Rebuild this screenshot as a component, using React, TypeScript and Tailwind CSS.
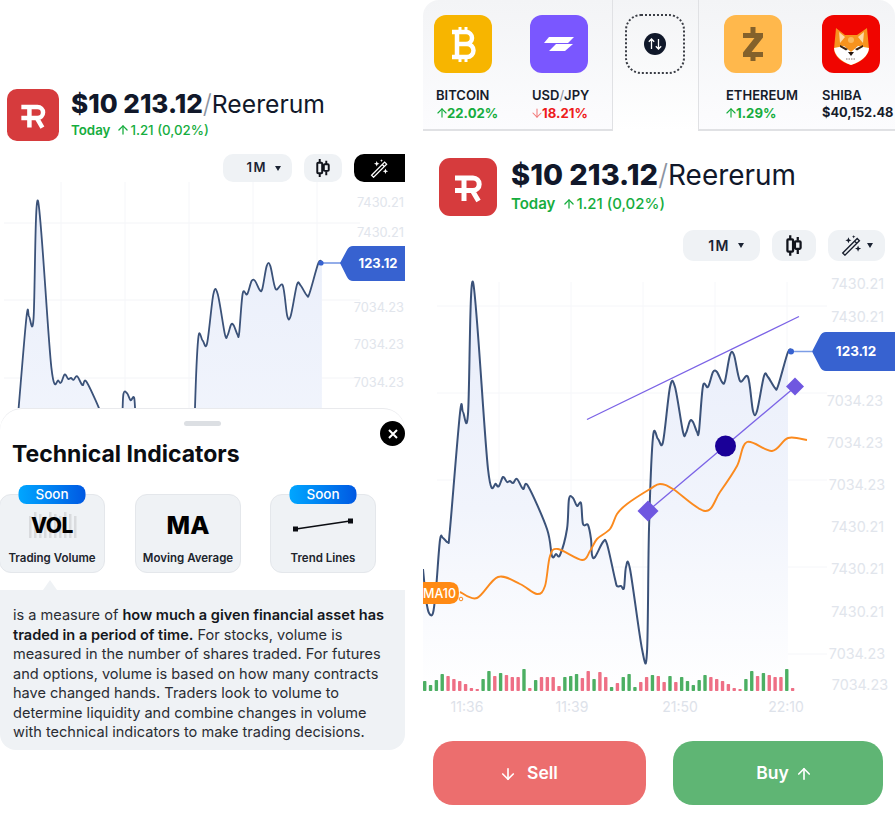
import {ArrowDown, ArrowUp} from "lucide-react";

type Pt = [number, number];

// price line, in the coordinates of the right hand chart
const PRICE: Pt[] = [
    [423, 570], [426, 600], [429, 614], [433, 614], [436, 590], [440, 541], [443, 539], [448, 543], [450, 530],
    [460, 414], [463, 413], [468, 415], [473, 283], [488, 470], [496, 485], [499, 487], [503, 478], [507, 483],
    [510, 482], [513, 484], [517, 480], [523, 490], [528, 487], [547, 530], [552, 557], [556, 555], [560, 556],
    [567, 530], [569, 500], [573, 499], [577, 507], [581, 504], [583, 525], [588, 526], [591, 540], [592, 556],
    [595, 558], [603, 543], [607, 545], [615, 580], [617, 587], [621, 587], [624, 589], [626, 568], [630, 570],
    [642, 650], [647, 653], [649, 530], [653, 438], [658, 440], [663, 443], [670, 388], [675, 388], [683, 433],
    [686, 434], [690, 422], [693, 423], [697, 433], [699, 432], [703, 387], [708, 388], [713, 373], [717, 373],
    [722, 383], [725, 382], [730, 356], [734, 356], [740, 382], [748, 378], [753, 412], [757, 412], [764, 377],
    [768, 378], [775, 389], [778, 387], [788, 353], [792, 352],
];

const MA: Pt[] = [
    [460, 593], [477, 599], [498, 578], [520, 585], [537, 595], [545, 587], [550, 557], [558, 550], [582, 561],
    [590, 552], [597, 540], [610, 530], [617, 515], [627, 505], [650, 490], [660, 485], [673, 490], [705, 512],
    [720, 493], [737, 467], [747, 443], [772, 452], [788, 439], [807, 441],
];

const VOLUME = [
    "g10", "g6", "g11", "g17", "r15", "r12", "r10", "r7", "r3", "r2", "g12", "g20", "r15", "g18", "r16", "r14",
    "r14", "g22", "r3", "g11", "r14", "r14", "r14", "r5", "g14", "g15", "g17", "r13", "r20", "g12", "r19", "r14",
    "g4", "r8", "g14", "g17", "g4", "r9", "r14", "g16", "r15", "r9", "g15", "r9", "g14", "g10", "g6", "g11", "g16",
    "r14", "r12", "r10", "r7", "r3", "r2", "g12", "g20", "r15", "g18", "r16", "r14", "r14", "g22", "r3",
];

function smooth(points: Pt[]) {
    let d = `M${points[0][0]} ${points[0][1]}`;
    for (let i = 0; i < points.length - 1; i++) {
        const p0 = points[Math.max(i - 1, 0)];
        const p1 = points[i];
        const p2 = points[i + 1];
        const p3 = points[Math.min(i + 2, points.length - 1)];
        const c1x = p1[0] + (p2[0] - p0[0]) / 6;
        const c1y = p1[1] + (p2[1] - p0[1]) / 6;
        const c2x = p2[0] - (p3[0] - p1[0]) / 6;
        const c2y = p2[1] - (p3[1] - p1[1]) / 6;
        d += ` C${c1x.toFixed(1)} ${c1y.toFixed(1)} ${c2x.toFixed(1)} ${c2y.toFixed(1)} ${p2[0]} ${p2[1]}`;
    }
    return d;
}

function LogoR() {
    return (
        <svg viewBox="0 0 58 58" className="h-full w-full">
            <rect width="58" height="58" rx="11" fill="#d63b3d"/>
            <path d="M16 20H34a6.2 6.2 0 0 1 0 12.4H16M25 20V43M33 32l6.5 11" fill="none" stroke="#fff" strokeWidth="5"/>
        </svg>
    );
}

function Caret() {
    return (
        <svg viewBox="0 0 6 5" className="h-[5px] w-[6px]">
            <path d="M0 0H6L3 5Z" fill="#1b2333"/>
        </svg>
    );
}

function CandleIcon({className}: {className?: string}) {
    return (
        <svg viewBox="0 0 17 22" className={className} fill="none" stroke="#11141c" strokeWidth="2.4">
            <path d="M4.500 0V4M4.500 18V22M12.500 2V6M12.500 15V20"/>
            <rect x="1.500" y="4.500" width="6" height="13" rx="1"/>
            <rect x="9.500" y="6.500" width="6" height="8" rx="1"/>
        </svg>
    );
}

function WandIcon({className}: {className?: string}) {
    return (
        <svg viewBox="0 0 24 24" className={className} fill="none">
            <path d="M2 20.500L18.500 4L21 6.500L4.500 23ZM15.500 7L18 9.500" stroke="currentColor" strokeWidth="1.600"/>
            <path d="M8.500 2.500L9.500 5L12 6L9.500 7L8.500 9.500L7.500 7L5 6L7.500 5Z" fill="currentColor"/>
            <path d="M14.500 0L15 1.500L16.500 2L15 2.500L14.500 4L14 2.500L12.500 2L14 1.500Z" fill="currentColor"/>
            <path d="M19.500 12L20.500 14.500L23 15.500L20.500 16.500L19.500 19L18.500 16.500L16 15.500L18.500 14.500Z" fill="currentColor"/>
        </svg>
    );
}

function PriceHeader({big}: {big: boolean}) {
    return (
        <div className={big ? "flex items-center gap-[14px]" : "flex items-center gap-[12px]"}>
            <div className={big ? "h-[58px] w-[58px]" : "h-[52px] w-[52px]"}><LogoR/></div>
            <div className={big ? "pb-[2px]" : "pb-[2px]"}>
                <div className={big ? "text-[29px] leading-[32px] text-[#11182a]" : "text-[26px] leading-[28px] text-[#11182a]"}>
                    <span className="font-extrabold">$10 213.12</span>
                    <span className="font-light text-[#8b93a1]">/</span>
                    <span className={big ? "text-[27.900px] font-normal" : "text-[24.700px] font-normal"}>Reererum</span>
                </div>
                <div className={big ? "mt-[3px] flex items-center text-[15px] leading-[20px] font-medium text-[#16ad3e]" : "mt-[3px] flex items-center text-[13.300px] leading-[18px] font-medium text-[#16ad3e]"}>
                    <span className="font-semibold">Today</span>
                    <ArrowUp size={14} strokeWidth={2.2} className={big ? "ml-[7px]" : "ml-[6px]"}/>
                    <span>1.21 (0,02%)</span>
                </div>
            </div>
        </div>
    );
}

function LeftChart() {
    const pts = PRICE.map(([x, y]): Pt => [38 + (x - 473) * 0.89, 200 + (y - 282) * 0.89]);
    const line = smooth(pts);
    const labels: [string, number, number][] = [
        ["7430.21", 202, 404], ["7430.21", 232, 404], ["7034.23", 307, 404], ["7034.23", 344, 404], ["7034.23", 382, 404],
    ];
    return (
        <svg viewBox="0 182 405 226" className="block h-[226px] w-[405px]">
            <defs>
                <linearGradient id="leftFill" x1="0" y1="0" x2="0" y2="1">
                    <stop offset="0" stopColor="#e9eefa"/>
                    <stop offset="1" stopColor="#f7f9fe"/>
                </linearGradient>
            </defs>
            {[223, 300, 378].map((y) => <path key={y} d={`M4 ${y}H360`} stroke="#f3f4f7"/>)}
            {[61, 125, 189, 253, 317].map((x) => <path key={x} d={`M${x} 182V408`} stroke="#f5f6f9"/>)}
            <path d={`${line} L${pts[pts.length - 1][0]} 600 L${pts[0][0]} 600Z`} fill="url(#leftFill)"/>
            <path d={line} fill="none" stroke="#3b5279" strokeWidth="1.800"/>
            <path d="M321 263H341" stroke="#6f92e2" strokeWidth="1.500"/>
            <circle cx="321" cy="263" r="2.600" fill="#3762d0"/>
            <path d="M340 263L347 250Q349 246 353 246H405V281H353Q349 281 347 277Z" fill="#3762d0"/>
            <text x="378" y="267.500" textAnchor="middle" className="fill-white text-[13px] font-bold">123.12</text>
            {labels.map(([t, y, x]) => (
                <text key={y} x={x} y={y + 4.5} textAnchor="end" className="fill-[#e1e5ec] text-[12.800px]">{t}</text>
            ))}
        </svg>
    );
}

function RightChart() {
    const line = smooth(PRICE);
    const labels: [string, number, number][] = [
        ["7430.21", 285, 884], ["7430.21", 318, 884], ["7034.23", 402, 883], ["7034.23", 444, 883], ["7034.23", 486, 885],
        ["7430.21", 528, 884], ["7430.21", 570, 884], ["7430.21", 613, 884], ["7034.23", 655, 885], ["7034.23", 686, 888],
    ];
    const times: [string, number][] = [["11:36", 467], ["11:39", 572], ["21:50", 680], ["22:10", 786]];
    return (
        <svg viewBox="423 270 472 450" className="block h-[450px] w-[472px]">
            <defs>
                <linearGradient id="rightFill" x1="0" y1="0" x2="0" y2="1">
                    <stop offset="0" stopColor="#e8edfa"/>
                    <stop offset="0.55" stopColor="#f1f4fc"/>
                    <stop offset="1" stopColor="#ffffff"/>
                </linearGradient>
            </defs>
            {[307, 394, 481, 568, 655].map((y) => <path key={y} d={`M437 ${y}H827`} stroke="#f5f6f9"/>)}
            {[499, 571, 643, 715, 787].map((x) => <path key={x} d={`M${x} 283V690`} stroke="#f6f7fa"/>)}
            <path d={`${line} L788 353 L788 695 L423 695Z`} fill="url(#rightFill)"/>
            <path d={line} fill="none" stroke="#3b5279" strokeWidth="2"/>
            <path d="M587 420.500L799 317.500" stroke="#7b63e6" strokeWidth="1.300"/>
            <path d="M648 512L795 388" stroke="#7b63e6" strokeWidth="1.300"/>
            <path d={smooth(MA)} fill="none" stroke="#fb8a1e" strokeWidth="1.900"/>
            <path d="M648 501.500L658.500 512L648 522.500L637.500 512Z" fill="#6f57e0"/>
            <path d="M795 378.500L804 387.500L795 396.500L786 387.500Z" fill="#6f57e0"/>
            <circle cx="725.500" cy="447" r="10.500" fill="#1a0098"/>
            <path d="M791 352.500H812" stroke="#7c9de6" strokeWidth="1.500"/>
            <circle cx="791" cy="352.500" r="3" fill="#3762d0"/>
            <path d="M812 352.500L820 337Q822 333 826 333H895V372H826Q822 372 820 368Z" fill="#3762d0"/>
            <text x="856" y="357" textAnchor="middle" className="fill-white text-[13.500px] font-bold">123.12</text>
            <path d="M423 583H450Q459 583 459 594Q459 605 450 605H423Z" fill="#ff8a14"/>
            <text x="423" y="599" className="fill-white text-[12.500px] font-medium">MA10</text>
            <circle cx="461" cy="600" r="1.800" fill="none" stroke="#fb8a1e"/>
            {VOLUME.map((v, i) => {
                const h = Number(v.slice(1));
                return (
                    <rect key={i} x={423 + i * 5.84} y={692 - h} width="3.400" height={h} rx="0.800" fill={v[0] === "g" ? "#4caf63" : "#ee6f85"}/>
                );
            })}
            {times.map(([t, x]) => (
                <text key={t} x={x} y={713} textAnchor="middle" className="fill-[#dde2ea] text-[14px]">{t}</text>
            ))}
            {labels.map(([t, y, x]) => (
                <text key={y} x={x} y={y + 5} textAnchor="end" className="fill-[#e1e5ec] text-[14.300px]">{t}</text>
            ))}
        </svg>
    );
}

function Coin({name, children, value}: {name: React.ReactNode; children: React.ReactNode; value: React.ReactNode}) {
    return (
        <div className="w-[96px] shrink-0">
            <div className="h-[58px] w-[58px]">{children}</div>
            <div className="mt-[14px] pl-[2px] text-[13px] leading-[16px] font-semibold whitespace-nowrap text-[#161c2b]">{name}</div>
            <div className="mt-[1px] flex items-center text-[13.200px] leading-[18px] font-bold whitespace-nowrap">{value}</div>
        </div>
    );
}

function CoinStrip() {
    return (
        <div className="flex h-[131px]">
            <div className="flex w-[190px] shrink-0 overflow-hidden rounded-tl-[16px] border-r border-b-2 border-[#e0e1e4] bg-linear-to-b from-[#f3f4f6] to-[#fcfcfe] pt-[15px] pl-[11px]">
                <Coin
                    name="BITCOIN"
                    value={<span className="flex items-center text-[#16ad3e]"><ArrowUp size={14} strokeWidth={2} className="mr-[-2px] ml-[1px]"/>22.02%</span>}
                >
                    <svg viewBox="0 0 58 58" className="h-full w-full">
                        <rect width="58" height="58" rx="12" fill="#f7b500"/>
                        <path d="M18 17H32a6 6 0 0 1 0 12H23M23 29H33a6.500 6.500 0 0 1 0 13H18M23 17V42" fill="none" stroke="#fff" strokeWidth="4.500"/>
                        <path d="M26 12V17M32 12V17M26 42V47M32 42V47" stroke="#fff" strokeWidth="3"/>
                    </svg>
                </Coin>
                <Coin
                    name={<>USD<span className="font-normal text-[#8b93a1]">/</span>JPY</>}
                    value={<span className="flex items-center text-[#ee1c1c]"><ArrowDown size={14} strokeWidth={1.8} className="mr-[-2px] text-[#f27a7a]"/>18.21%</span>}
                >
                    <svg viewBox="0 0 58 58" className="h-full w-full">
                        <rect width="58" height="58" rx="12" fill="#7a57ff"/>
                        <path d="M19 22H44L38 28H14ZM26 29H43L35 36H19Z" fill="#fff"/>
                    </svg>
                </Coin>
            </div>
            <div className="w-[85px] shrink-0 bg-linear-to-b from-[#f3f4f6] to-white pt-[14px] pl-[12px]">
                <div className="flex h-[60px] w-[60px] items-center justify-center rounded-[16px] border-2 border-dotted border-[#3a3d45]">
                    <svg viewBox="0 0 22 22" className="h-[22px] w-[22px]">
                        <circle cx="11" cy="11" r="11" fill="#10182a"/>
                        <path d="M7.500 16V6M4.800 8.700L7.500 6l2.700 2.700M14.500 6V16M11.800 13.300L14.500 16l2.700-2.700" fill="none" stroke="#fff" strokeWidth="1.300"/>
                    </svg>
                </div>
            </div>
            <div className="flex w-[197px] shrink-0 overflow-hidden rounded-tr-[16px] border-b-2 border-l border-[#e0e1e4] bg-linear-to-b from-[#f3f4f6] to-[#fcfcfe] pt-[15px] pl-[25px]">
                <div className="w-[98px] shrink-0">
                    <Coin
                        name="ETHEREUM"
                        value={<span className="flex items-center text-[#16ad3e]"><ArrowUp size={14} strokeWidth={2} className="mr-[-2px]"/>1.29%</span>}
                    >
                        <svg viewBox="0 0 58 58" className="h-full w-full">
                            <rect width="58" height="58" rx="12" fill="#ffb84c"/>
                            <path d="M26.500 12H31.500V18H39V22.500L27.500 37H39V42H31.500V46H26.500V42H19V37.500L30.500 23H19V18H26.500Z" fill="#84612b"/>
                        </svg>
                    </Coin>
                </div>
                <Coin name={<span className="-ml-[2px]">SHIBA</span>} value={<span className="text-[12.800px] text-[#161c2b]">$40,152.48</span>}>
                    <svg viewBox="0 0 58 58" className="h-full w-full">
                        <rect width="58" height="58" rx="12" fill="#f00500"/>
                        <path d="M14 13L23 20H35L45 13L47 34Q45 45 29 50Q13 45 12 34Z" fill="#f7931e"/>
                        <path d="M17 17L23 22L18 28ZM42 17L36 22L41 28Z" fill="#fcd9a8"/>
                        <path d="M12 33L22 31L29 37L36 31L47 33Q46 44 29 50Q13 44 12 33Z" fill="#fff"/>
                        <path d="M18 30L26 34L24 35.500L18 32ZM41 30L33 34L35 35.500L41 32Z" fill="#3a2412"/>
                        <path d="M26 37H32L29 41Z" fill="#241610"/>
                        <path d="M24 44H34" stroke="#8a7a70" strokeWidth="1.200" strokeDasharray="1.500 1"/>
                        <circle cx="29" cy="25" r="3" fill="#fbb85c"/>
                    </svg>
                </Coin>
            </div>
        </div>
    );
}

function IndicatorCard({label, soon, className, children}: {label: string; soon?: boolean; className?: string; children: React.ReactNode}) {
    return (
        <div className={`relative flex h-[79px] w-[106px] flex-col items-center rounded-[12px] border border-[#e4e7eb] bg-[#eff2f5] ${className ?? ""}`}>
            {soon ? (
                <div className="absolute -top-[10px] left-1/2 h-[19px] w-[67px] -translate-x-1/2 rounded-[8px] bg-linear-to-r from-[#00a6ff] to-[#0058e2] text-center text-[13.500px] leading-[19px] font-medium text-white">
                    Soon
                </div>
            ) : null}
            <div className="relative mt-[10px] flex h-[40px] w-full items-center justify-center">{children}</div>
            <div className="mt-[5px] text-[11.500px] leading-[16px] font-semibold whitespace-nowrap text-[#20242c]">{label}</div>
        </div>
    );
}

function IndicatorSheet() {
    return (
        <div className="relative h-[342px] w-[405px] rounded-t-[22px] border-t border-[#e9eaed] bg-white">
            <div className="mx-auto mt-[12px] h-[5px] w-[37px] rounded-full bg-[#dcdfe3]"/>
            <button type="button" className="absolute top-[12px] left-[380px] flex h-[25px] w-[25px] items-center justify-center rounded-full bg-black">
                <svg viewBox="0 0 10 10" className="h-[10px] w-[10px]">
                    <path d="M1 1L9 9M9 1L1 9" stroke="#fff" strokeWidth="2"/>
                </svg>
            </button>
            <h2 className="mt-[13px] pl-[12px] text-[23px] leading-[30px] font-bold text-[#0b0d12]">Technical Indicators</h2>
            <div className="mt-[25px] flex gap-[29px]">
                <IndicatorCard label="Trading Volume" soon className="-ml-[1px] mr-[1px]">
                    <svg viewBox="0 0 50 30" className="absolute top-[5px] left-[28px] h-[30px] w-[50px]">
                        {[1, 6, 11, 16, 21, 26, 31, 36, 41, 46].map((x, i) => (
                            <rect key={x} x={x} y={i % 3 === 0 ? 6 : i % 3 === 1 ? 2 : 4} width="2.500" height={i % 3 === 0 ? 22 : i % 3 === 1 ? 26 : 24} fill="#d9dbde"/>
                        ))}
                    </svg>
                    <span className="relative text-[21px] leading-none font-extrabold tracking-[-0.5px] text-black">VOL</span>
                </IndicatorCard>
                <IndicatorCard label="Moving Average">
                    <span className="text-[25px] leading-none font-extrabold text-black">MA</span>
                </IndicatorCard>
                <IndicatorCard label="Trend Lines" soon>
                    <svg viewBox="0 0 60 14" className="h-[14px] w-[60px]">
                        <path d="M3 11L57 3" stroke="#0b0d12" strokeWidth="1.500"/>
                        <rect x="0" y="8.500" width="5" height="5" fill="#0b0d12"/>
                        <rect x="55" y="0.500" width="5" height="5" fill="#0b0d12"/>
                    </svg>
                </IndicatorCard>
            </div>
            <div className="relative mt-[17px] h-[160px] rounded-b-[16px] bg-[#eff2f5] pt-[16px] pl-[13px] text-[14.550px] leading-[19.500px] whitespace-nowrap text-[#2a2d33]">
                <div className="absolute -top-[10px] left-[43px] h-[10px] w-[14px] bg-[#eff2f5] [clip-path:polygon(50%_0,100%_100%,0_100%)]"/>
                is a measure of <b className="font-semibold text-[#14171c]">how much a given financial asset has</b><br/>
                <b className="font-semibold text-[#14171c]">traded in a period of time.</b> For stocks, volume is<br/>
                measured in the number of shares traded. For futures<br/>
                and options, volume is based on how many contracts<br/>
                have changed hands. Traders look to volume to<br/>
                determine liquidity and combine changes in volume<br/>
                with technical indicators to make trading decisions.
            </div>
        </div>
    );
}

export default function App() {
    return (
        <div className="flex h-[827px] w-[895px] gap-[18px] overflow-hidden bg-white [font-family:Inter,sans-serif]">
            <div className="w-[405px] shrink-0 overflow-hidden pt-[89px]">
                <div className="pl-[7px]"><PriceHeader big={false}/></div>
                <div className="mt-[13px] flex h-[28px] justify-end gap-[12px]">
                    <div className="flex w-[69px] items-center justify-end gap-[8px] rounded-[10px] bg-[#eff2f5] pr-[11px] text-[13px] font-semibold tracking-[1.5px] text-[#1b2333]">
                        1M <Caret/>
                    </div>
                    <div className="flex w-[38px] items-center justify-center rounded-[10px] bg-[#eff2f5]">
                        <CandleIcon className="h-[18px] w-[14px]"/>
                    </div>
                    <div className="flex w-[51px] items-center justify-center rounded-l-[10px] bg-black text-white">
                        <WandIcon className="h-[19px] w-[19px]"/>
                    </div>
                </div>
                <LeftChart/>
                <IndicatorSheet/>
            </div>
            <div className="w-[472px] shrink-0">
                <CoinStrip/>
                <div className="mt-[27px] pl-[16px]"><PriceHeader big/></div>
                <div className="mt-[14px] flex h-[31px] justify-end gap-[12px] pr-[10px]">
                    <div className="flex w-[77px] items-center justify-end gap-[8px] rounded-[11px] bg-[#eff2f5] pr-[16px] text-[14px] font-semibold tracking-[1.5px] text-[#1b2333]">
                        1M <Caret/>
                    </div>
                    <div className="flex w-[44px] items-center justify-center rounded-[11px] bg-[#eff2f5]">
                        <CandleIcon className="h-[21px] w-[16px]"/>
                    </div>
                    <div className="flex w-[57px] items-center justify-center gap-[5px] rounded-[11px] bg-[#eff2f5] text-[#161c2b]">
                        <WandIcon className="h-[21px] w-[21px]"/>
                        <Caret/>
                    </div>
                </div>
                <div className="mt-[8px]"><RightChart/></div>
                <div className="mt-[22px] flex gap-[27px] pl-[10px]">
                    <button type="button" className="flex h-[64px] w-[213px] items-center justify-center gap-[10px] rounded-[20px] bg-[#ec6e6e] pt-[1px] pr-[22px] text-[17.500px] font-semibold text-white">
                        <ArrowDown size={18} strokeWidth={2.2}/>Sell
                    </button>
                    <button type="button" className="flex h-[64px] w-[210px] items-center justify-center gap-[6px] rounded-[20px] bg-[#5fb574] pt-[1px] pl-[13px] text-[17.500px] font-semibold text-white">
                        Buy<ArrowUp size={18} strokeWidth={2.2}/>
                    </button>
                </div>
            </div>
        </div>
    );
}
